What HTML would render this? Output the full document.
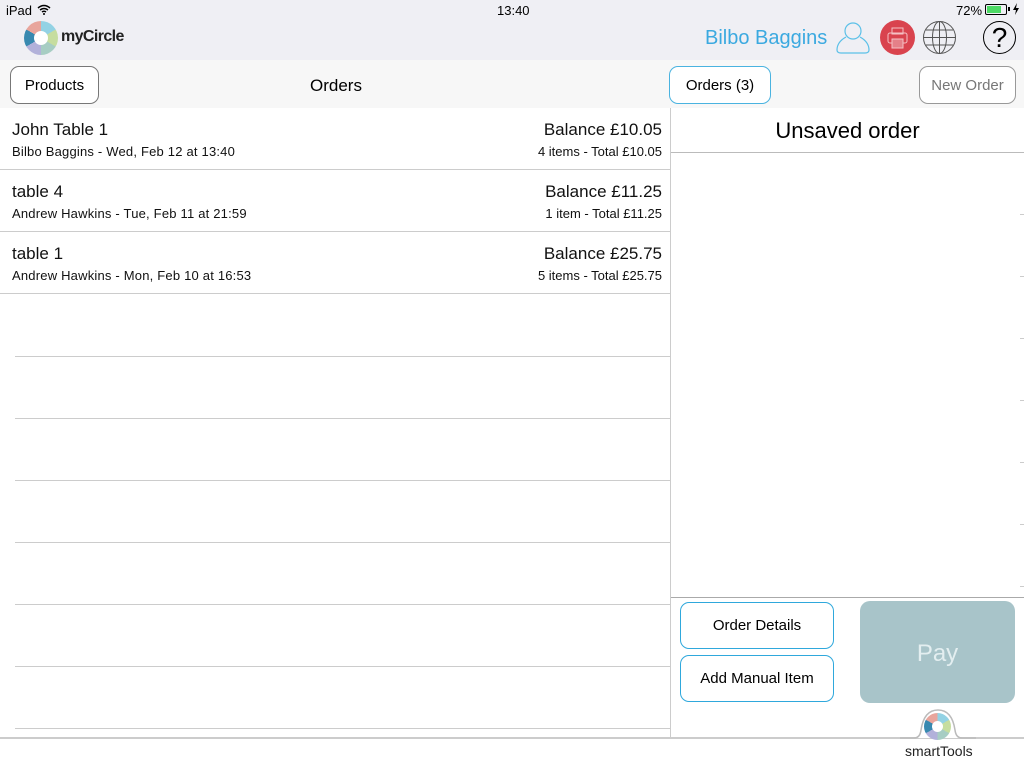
<!DOCTYPE html><html><head><style>
body{margin:0;width:1024px;height:768px;position:relative;overflow:hidden;background:#fff;font-family:"Liberation Sans",sans-serif;}
.a{position:absolute}
.ring{border-radius:50%;background:conic-gradient(#93d2e4 0 60deg,#c6dd9f 60deg 120deg,#a7cdc3 120deg 180deg,#b2b1da 180deg 240deg,#3889b0 240deg 300deg,#e8a59c 300deg 360deg)}
.hole{border-radius:50%;background:#fff}
.btn{position:absolute;border:1px solid #888;border-radius:9px;background:#fff;font-size:15px;text-align:center;box-sizing:border-box}
.row{position:absolute;left:0;width:670px;height:62px;border-bottom:1px solid #ccc;box-sizing:border-box}
.t1{position:absolute;left:12px;top:12px;font-size:17px;color:#111}
.t2{position:absolute;left:12px;top:36px;font-size:13px;color:#111;letter-spacing:0.2px}
.r1{position:absolute;right:8px;top:12px;font-size:17px;color:#111}
.r2{position:absolute;right:8px;top:36px;font-size:13px;color:#111}
.line{position:absolute;left:15px;width:655px;height:1px;background:#ccc}
.tick{position:absolute;right:0;width:4px;height:1px;background:#ccc}
</style></head><body>
<div class="a" style="left:0;top:0;width:1024px;height:60px;background:#efeff4"></div>
<div class="a" style="left:6px;top:3px;font-size:13px">iPad</div>
<svg class="a" style="left:37px;top:4px" width="14" height="11" viewBox="0 0 14 11"><path d="M1 4 Q7 -1 13 4 M3 6 Q7 3 11 6 M5 8 Q7 6.5 9 8" stroke="#000" stroke-width="1.5" fill="none"/><circle cx="7" cy="10" r="1" fill="#000"/></svg>
<div class="a" style="left:497px;top:3px;font-size:13px">13:40</div>
<div class="a" style="left:956px;top:3px;font-size:13px">72%</div>
<div class="a" style="left:985px;top:4px;width:20px;height:9px;border:1px solid #000;border-radius:2px"><div style="margin:1px;width:14px;height:7px;background:#4cd964"></div></div>
<div class="a" style="left:1008px;top:7px;width:2px;height:4px;background:#000"></div>
<svg class="a" style="left:1013px;top:3px" width="6" height="12" viewBox="0 0 6 12"><path d="M4 0 L0 7 H3 L2 12 L6 5 H3 Z" fill="#000"/></svg>
<div class="a ring" style="left:24px;top:21px;width:34px;height:34px"></div>
<div class="a hole" style="left:34px;top:31px;width:14px;height:14px"></div>
<div class="a" style="left:61px;top:28px;font-size:16px;font-weight:bold;letter-spacing:-0.6px;color:#222">myCircle</div>
<div class="a" style="left:705px;top:27px;font-size:20px;color:#3ba9e0">Bilbo Baggins</div>
<svg class="a" style="left:835px;top:20px" width="36" height="34" viewBox="0 0 36 34"><circle cx="18" cy="11" r="8" fill="none" stroke="#5bc0e8" stroke-width="1.2"/><path d="M11 17 Q2 22 2 30 Q2 33 6 33 L30 33 Q34 33 34 30 Q34 22 25 17" fill="none" stroke="#5bc0e8" stroke-width="1.2"/></svg>
<div class="a" style="left:880px;top:20px;width:35px;height:35px;border-radius:50%;background:#d9434e"></div>
<svg class="a" style="left:880px;top:20px" width="35" height="35" viewBox="0 0 35 35"><rect x="12" y="8" width="11" height="6" fill="none" stroke="#f5c0c4"/><rect x="8" y="13" width="19" height="10" rx="2" fill="none" stroke="#f5c0c4"/><rect x="12" y="19" width="11" height="9" fill="#e58088" stroke="#f5c0c4"/></svg>
<svg class="a" style="left:922px;top:20px" width="35" height="35" viewBox="0 0 35 35" fill="none" stroke="#555" stroke-width="1"><circle cx="17.5" cy="17.5" r="16"/><ellipse cx="17.5" cy="17.5" rx="7" ry="16"/><line x1="17.5" y1="1.5" x2="17.5" y2="33.5"/><line x1="1.5" y1="17.5" x2="33.5" y2="17.5"/><path d="M4 10 H31 M4 25 H31"/></svg>
<div class="a" style="left:983px;top:21px;width:31px;height:31px;border:1px solid #000;border-radius:50%;text-align:center;font-size:28px;line-height:32px">?</div>
<div class="a" style="left:0;top:60px;width:1024px;height:48px;background:#f7f7f7"></div>
<div class="btn" style="left:10px;top:66px;width:89px;height:38px;line-height:38px;border-color:#777">Products</div>
<div class="a" style="left:310px;top:76px;font-size:17px">Orders</div>
<div class="btn" style="left:669px;top:66px;width:102px;height:38px;line-height:38px;border-color:#4ab3e0">Orders (3)</div>
<div class="btn" style="left:919px;top:66px;width:97px;height:38px;line-height:38px;border-color:#999;color:#777">New Order</div>
<div class="row" style="top:108px"><div class="t1">John Table 1</div><div class="t2">Bilbo Baggins - Wed, Feb 12 at 13:40</div><div class="r1">Balance £10.05</div><div class="r2">4 items - Total £10.05</div></div>
<div class="row" style="top:170px"><div class="t1">table 4</div><div class="t2">Andrew Hawkins - Tue, Feb 11 at 21:59</div><div class="r1">Balance £11.25</div><div class="r2">1 item - Total £11.25</div></div>
<div class="row" style="top:232px"><div class="t1">table 1</div><div class="t2">Andrew Hawkins - Mon, Feb 10 at 16:53</div><div class="r1">Balance £25.75</div><div class="r2">5 items - Total £25.75</div></div>
<div class="line" style="top:356px"></div><div class="line" style="top:418px"></div><div class="line" style="top:480px"></div><div class="line" style="top:542px"></div><div class="line" style="top:604px"></div><div class="line" style="top:666px"></div><div class="line" style="top:728px"></div>
<div class="a" style="left:670px;top:108px;width:1px;height:630px;background:#ccc"></div>
<div class="a" style="left:671px;top:118px;width:353px;text-align:center;font-size:22px">Unsaved order</div>
<div class="a" style="left:671px;top:152px;width:353px;height:1px;background:#bbb"></div>
<div class="tick" style="top:214px"></div><div class="tick" style="top:276px"></div><div class="tick" style="top:338px"></div><div class="tick" style="top:400px"></div><div class="tick" style="top:462px"></div><div class="tick" style="top:524px"></div><div class="tick" style="top:586px"></div>
<div class="a" style="left:671px;top:597px;width:353px;height:1px;background:#aaa"></div>
<div class="btn" style="left:680px;top:602px;width:154px;height:47px;line-height:45px;border-color:#2fa8dc">Order Details</div>
<div class="btn" style="left:680px;top:655px;width:154px;height:47px;line-height:45px;border-color:#2fa8dc">Add Manual Item</div>
<div class="a" style="left:860px;top:601px;width:155px;height:102px;border-radius:10px;background:#a8c4c9;color:#e3eef0;font-size:24px;text-align:center;line-height:106px">Pay</div>
<div class="a" style="left:0;top:737px;width:1024px;height:2px;background:#ccc"></div>
<svg class="a" style="left:900px;top:708px" width="76" height="32" viewBox="0 0 76 32"><path d="M0 30 H14 Q20 30 21 22 Q24 2 38 2 Q52 2 55 22 Q56 30 62 30 H76" fill="#fff" stroke="#bbb" stroke-width="1.5"/></svg>
<div class="a ring" style="left:924px;top:713px;width:27px;height:27px"></div>
<div class="a hole" style="left:932px;top:721px;width:11px;height:11px"></div>
<div class="a" style="left:905px;top:743px;font-size:14px;color:#222">smartTools</div>
</body></html>
